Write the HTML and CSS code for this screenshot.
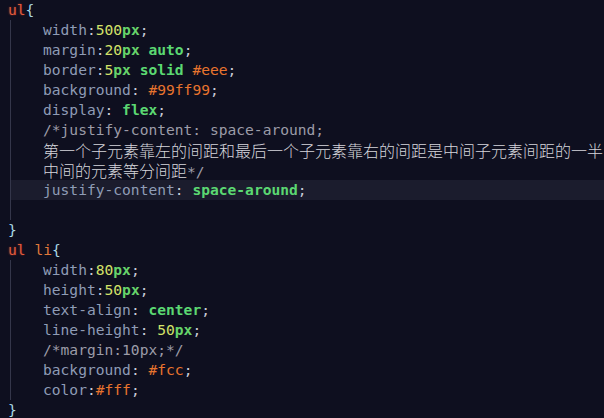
FILE: index.html
```html
<!DOCTYPE html>
<html>
<head>
<meta charset="utf-8">
<link rel="stylesheet" href="styles.css">
</head>
<body>
<div class="editor">
  <div class="line"><span class="sel">ul</span><span class="br">{</span></div>
  <div class="body">
    <div class="line"><span class="prop">width</span><span class="pn">:</span><span class="num">500</span><span class="unit">px</span><span class="pn">;</span></div>
    <div class="line"><span class="prop">margin</span><span class="pn">:</span><span class="num">20</span><span class="unit">px</span> <span class="kw">auto</span><span class="pn">;</span></div>
    <div class="line"><span class="prop">border</span><span class="pn">:</span><span class="num">5</span><span class="unit">px</span> <span class="kw">solid</span> <span class="hex">#eee</span><span class="pn">;</span></div>
    <div class="line"><span class="prop">background</span><span class="pn">:</span> <span class="hex">#99ff99</span><span class="pn">;</span></div>
    <div class="line"><span class="prop">display</span><span class="pn">:</span> <span class="kw">flex</span><span class="pn">;</span></div>
    <div class="line"><span class="cm">/*justify-content: space-around;</span></div>
    <div class="line"><span class="cjk">第一个子元素靠左的间距和最后一个子元素靠右的间距是中间子元素间距的一半</span></div>
    <div class="line"><span class="cjk">中间的元素等分间距</span><span class="cm">*/</span></div>
    <div class="line hl"><span class="prop">justify-content</span><span class="pn">:</span> <span class="kw">space-around</span><span class="pn">;</span></div>
    <div class="line"></div>
  </div>
  <div class="line"><span class="br">}</span></div>
  <div class="line"><span class="sel">ul</span> <span class="sel2">li</span><span class="br">{</span></div>
  <div class="body">
    <div class="line"><span class="prop">width</span><span class="pn">:</span><span class="num">80</span><span class="unit">px</span><span class="pn">;</span></div>
    <div class="line"><span class="prop">height</span><span class="pn">:</span><span class="num">50</span><span class="unit">px</span><span class="pn">;</span></div>
    <div class="line"><span class="prop">text-align</span><span class="pn">:</span> <span class="kw">center</span><span class="pn">;</span></div>
    <div class="line"><span class="prop">line-height</span><span class="pn">:</span> <span class="num">50</span><span class="unit">px</span><span class="pn">;</span></div>
    <div class="line"><span class="cm">/*margin:10px;*/</span></div>
    <div class="line"><span class="prop">background</span><span class="pn">:</span> <span class="hex">#fcc</span><span class="pn">;</span></div>
    <div class="line"><span class="prop">color</span><span class="pn">:</span><span class="hex">#fff</span><span class="pn">;</span></div>
  </div>
  <div class="line"><span class="br">}</span></div>
</div>
</body>
</html>
```
FILE: styles.css
```css
html, body {
  margin: 0;
  padding: 0;
  background: #0e0f1f;
}
.editor {
  width: 604px;
  height: 418px;
  overflow: hidden;
  background: #0e0f1f;
  padding-left: 8px;
  box-sizing: border-box;
  font-family: "DejaVu Sans Mono", "Liberation Mono", monospace;
  font-size: 14.6px;
  color: #d0d0d8;
}
.line {
  height: 20px;
  line-height: 20px;
  white-space: pre;
}
.body {
  margin-left: 2px;
  border-left: 1px solid #34364a;
  padding-left: 32px;
}
.hl {
  margin-left: -32px;
  padding-left: 32px;
  margin-right: -8px;
  background: #1b1c2d;
}
.sel { color: #df5a3c; text-shadow: 0 0 2px rgba(220, 60, 40, 0.6); }
.sel2 { color: #e0793a; }
.br { color: #a9d9e4; }
.prop { color: #8f9cb6; }
.pn { color: #c9cbd6; }
.num { color: #d3e168; }
.unit { color: #66d36a; font-weight: bold; }
.kw { color: #5bd872; font-weight: bold; }
.hex { color: #e8742e; }
.cm { color: #9c9ca8; }
.cjk {
  font-family: "Noto Sans CJK SC", sans-serif;
  font-size: 16px;
  font-weight: 300;
  line-height: 20px;
  color: #d6d6dc;
}
```
